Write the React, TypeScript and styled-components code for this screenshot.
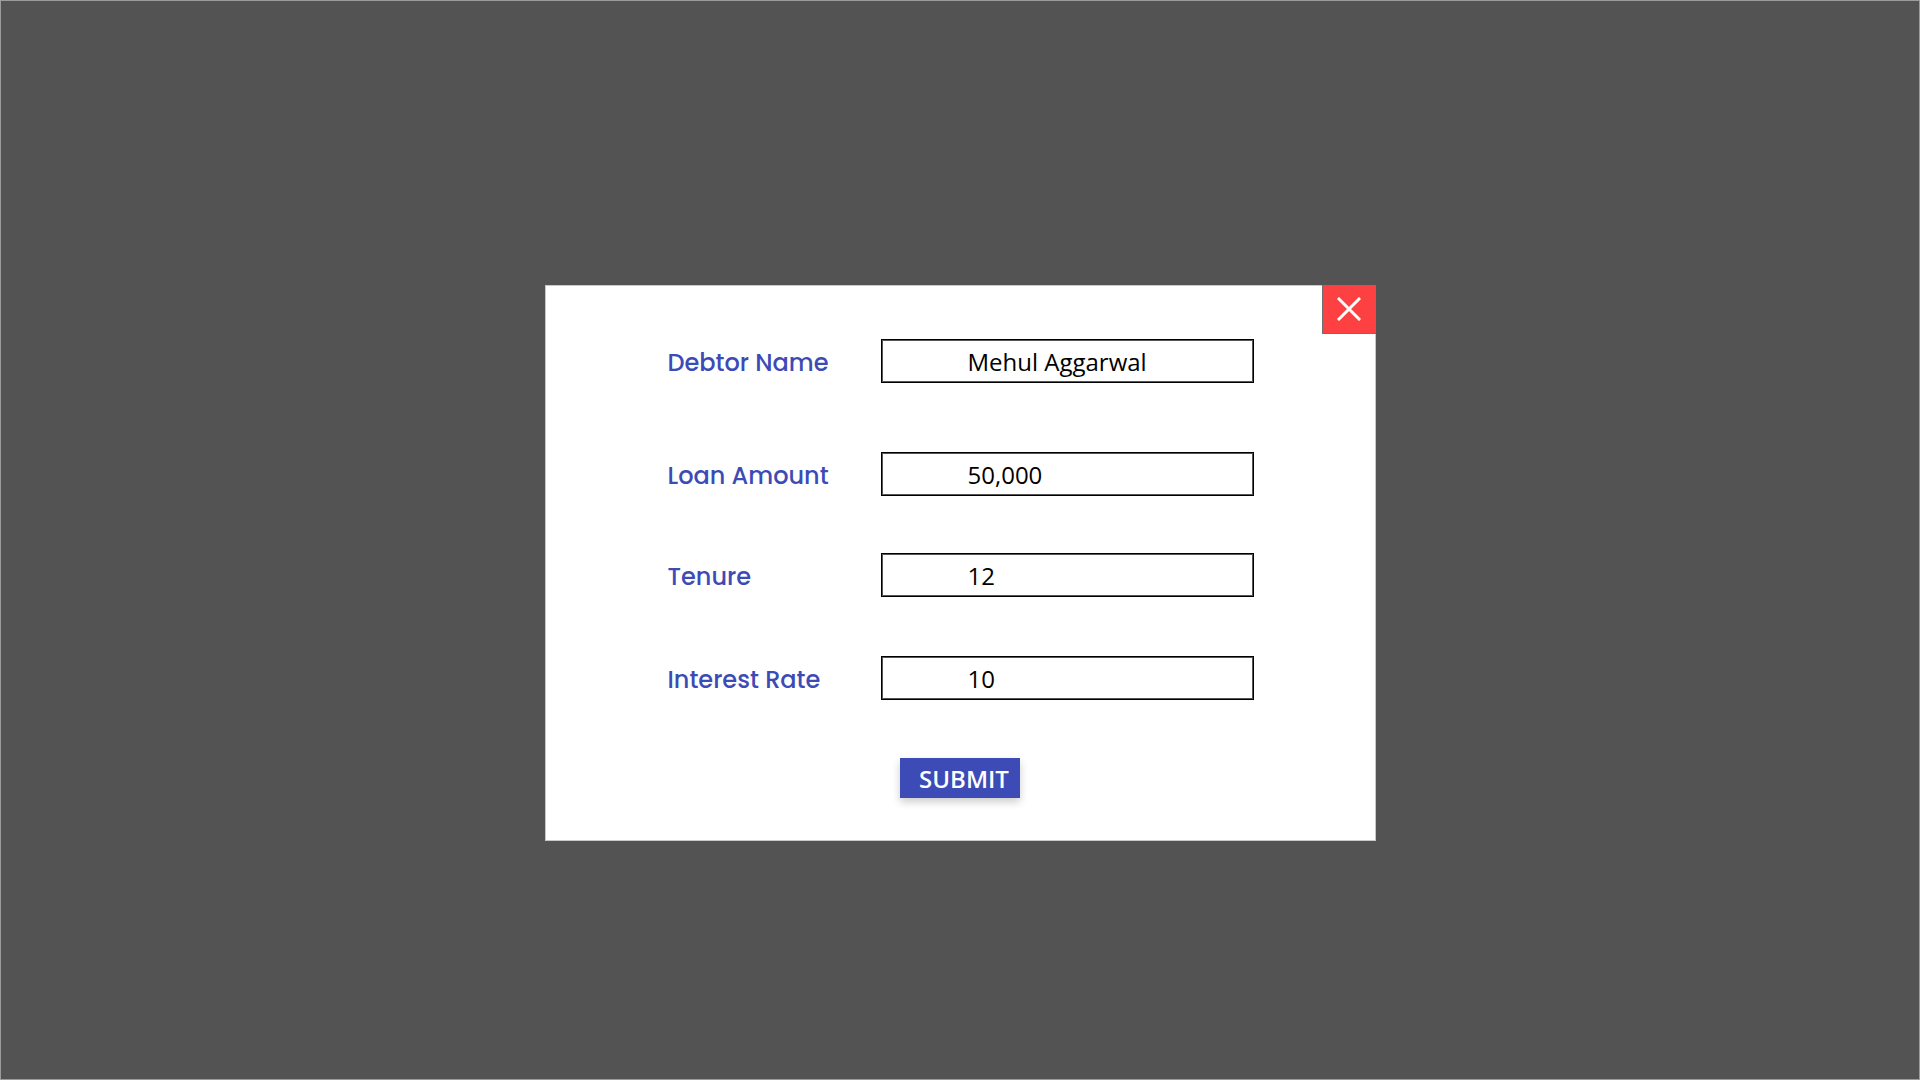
import React from "react";
import styled, { createGlobalStyle } from "styled-components";

const GlobalStyle = createGlobalStyle`
  html, body { margin: 0; padding: 0; }
  body { background: #535353; font-family: "Open Sans", sans-serif; }
  * { box-sizing: border-box; }
`;

const Page = styled.div`
  width: 1920px;
  height: 1080px;
  border: 1px solid #9c9c9c;
  background: #535353;
  display: flex;
  justify-content: center;
  align-items: flex-start;
  padding-top: 284px;
`;

const Modal = styled.div`
  position: relative;
  width: 831px;
  height: 556px;
  background: #ffffff;
  border: 1px solid #c9c9c9;
  padding: 53px 0 0 122px;
  display: flex;
  flex-direction: column;
`;

const CloseButton = styled.button`
  position: absolute;
  top: -1px;
  right: -1px;
  width: 54px;
  height: 49px;
  background: #fd4143;
  border: none;
  border-left: 1px solid #707070;
  border-bottom: 1px solid #707070;
  display: flex;
  align-items: center;
  justify-content: center;
  padding: 0;
  cursor: pointer;
`;

const Row = styled.div<{ $gap: number }>`
  display: grid;
  grid-template-columns: 213px 373px;
  align-items: center;
  margin-top: ${(p) => p.$gap}px;
`;

const Label = styled.label`
  font-family: "Poppins", "Inter", sans-serif;
  font-weight: 500;
  font-size: 24px;
  line-height: 1.2;
  padding-top: 4px;
  color: #3d4bb6;
`;

const Field = styled.div`
  height: 44px;
  border: 1px solid #000;
  box-shadow: inset 0 0 0 1px #555;
  display: flex;
  align-items: center;
  padding-left: 86px;
  padding-top: 1px;
  font-family: "Open Sans", sans-serif;
  font-size: 24px;
  color: #000;
`;

const SubmitButton = styled.button`
  margin-top: 58px;
  margin-left: 232px;
  width: 120px;
  height: 40px;
  background: #3d4bb6;
  color: #ffffff;
  border: none;
  font-family: "Open Sans", sans-serif;
  font-weight: 600;
  font-size: 24px;
  padding: 0 0 0 9px;
  box-shadow: 0 4px 8px rgba(0, 0, 0, 0.2);
  cursor: pointer;
`;

const rows = [
  { label: "Debtor Name", value: "Mehul Aggarwal", gap: 0 },
  { label: "Loan Amount", value: "50,000", gap: 69 },
  { label: "Tenure", value: "12", gap: 57 },
  { label: "Interest Rate", value: "10", gap: 59 },
];

export default function App() {
  return (
    <>
      <GlobalStyle />
      <Page>
        <Modal>
          <CloseButton aria-label="Close">
            <svg width="24" height="24" viewBox="0 0 24 24">
              <path d="M2 2 L22 22 M22 2 L2 22" stroke="#fff" strokeWidth="3" strokeLinecap="square" />
            </svg>
          </CloseButton>
          {rows.map((r) => (
            <Row key={r.label} $gap={r.gap}>
              <Label>{r.label}</Label>
              <Field>{r.value}</Field>
            </Row>
          ))}
          <SubmitButton>SUBMIT</SubmitButton>
        </Modal>
      </Page>
    </>
  );
}
